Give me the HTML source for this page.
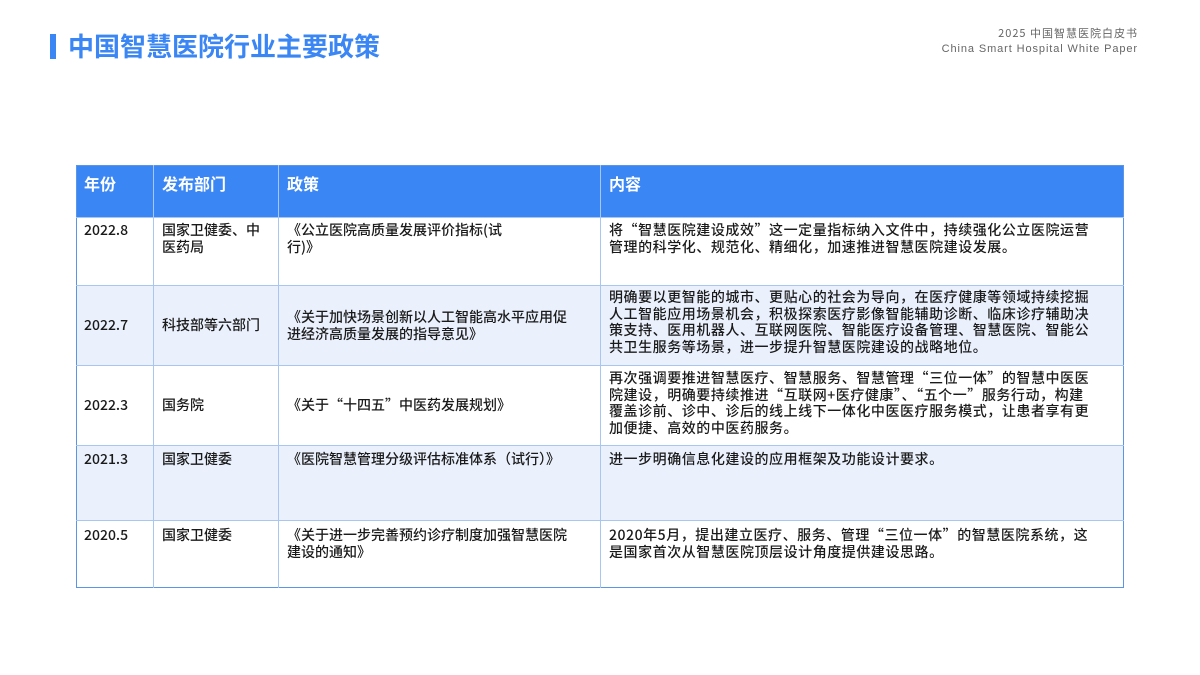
<!DOCTYPE html>
<html><head><meta charset="utf-8"><style>
body{margin:0;width:1200px;height:675px;background:#fff;position:relative;overflow:hidden;font-family:"Noto Sans CJK SC","Liberation Sans",sans-serif;color:#222}
.a{position:absolute}
.t{font-size:14px;line-height:16.5px;color:#1a1a1a;white-space:nowrap;font-weight:500}
.c{letter-spacing:0.55px}
.h{font-size:16px;font-weight:bold;color:#fff}
.vl{position:absolute;top:165px;height:423px;width:1px;background:#a9c6f0}
.hl{position:absolute;left:76px;width:1048px;height:1px;background:#a9c6f0}
</style></head><body>
<div class="a" style="left:50px;top:34px;width:6px;height:25px;background:#3a86f5"></div>
<div class="a" style="left:68px;top:28px;font-size:26px;line-height:36px;font-weight:bold;color:#3a86f5">中国智慧医院行业主要政策</div>
<div class="a" style="right:62px;top:26px;font-size:11px;color:#666;text-align:right;line-height:15px;letter-spacing:1px">2025 中国智慧医院白皮书<br><span style="font-family:'Liberation Sans',sans-serif;letter-spacing:0.9px">China Smart Hospital White Paper</span></div>

<div class="a" style="left:76px;top:165px;width:1048px;height:52px;background:#3a86f5"></div>
<div class="a" style="left:76px;top:285px;width:1048px;height:80px;background:#eaf1fd"></div>
<div class="a" style="left:76px;top:445px;width:1048px;height:75px;background:#eaf1fd"></div>
<div class="a" style="left:76px;top:165px;width:1046px;height:421px;border:1px solid #5b95e6"></div>
<div class="vl" style="left:153px"></div><div class="vl" style="left:278px"></div><div class="vl" style="left:600px"></div>
<div class="hl" style="top:217px"></div><div class="hl" style="top:285px"></div><div class="hl" style="top:365px"></div><div class="hl" style="top:445px"></div><div class="hl" style="top:520px"></div>

<div class="a h" style="left:84px;top:171px">年份</div>
<div class="a h" style="left:162px;top:171px">发布部门</div>
<div class="a h" style="left:287px;top:171px">政策</div>
<div class="a h" style="left:609px;top:171px">内容</div>

<div class="a t" style="left:84px;top:222px">2022.8</div>
<div class="a t" style="left:162px;top:222px">国家卫健委、中<br>医药局</div>
<div class="a t" style="left:287px;top:222px">《公立医院高质量发展评价指标(试<br>行)》</div>
<div class="a t c" style="left:609px;top:222px">将“智慧医院建设成效”这一定量指标纳入文件中，持续强化公立医院运营<br>管理的科学化、规范化、精细化，加速推进智慧医院建设发展。</div>

<div class="a t" style="left:84px;top:317px">2022.7</div>
<div class="a t" style="left:162px;top:317px">科技部等六部门</div>
<div class="a t" style="left:287px;top:309px">《关于加快场景创新以人工智能高水平应用促<br>进经济高质量发展的指导意见》</div>
<div class="a t c" style="left:609px;top:289px">明确要以更智能的城市、更贴心的社会为导向，在医疗健康等领域持续挖掘<br>人工智能应用场景机会，积极探索医疗影像智能辅助诊断、临床诊疗辅助决<br>策支持、医用机器人、互联网医院、智能医疗设备管理、智慧医院、智能公<br>共卫生服务等场景，进一步提升智慧医院建设的战略地位。</div>

<div class="a t" style="left:84px;top:397px">2022.3</div>
<div class="a t" style="left:162px;top:397px">国务院</div>
<div class="a t" style="left:287px;top:397px">《关于“十四五”中医药发展规划》</div>
<div class="a t c" style="left:609px;top:370px">再次强调要推进智慧医疗、智慧服务、智慧管理“三位一体”的智慧中医医<br>院建设，明确要持续推进“互联网+医疗健康”、“五个一”服务行动，构建<br>覆盖诊前、诊中、诊后的线上线下一体化中医医疗服务模式，让患者享有更<br>加便捷、高效的中医药服务。</div>

<div class="a t" style="left:84px;top:451px">2021.3</div>
<div class="a t" style="left:162px;top:451px">国家卫健委</div>
<div class="a t" style="left:287px;top:451px">《医院智慧管理分级评估标准体系（试行）》</div>
<div class="a t c" style="left:609px;top:451px">进一步明确信息化建设的应用框架及功能设计要求。</div>

<div class="a t" style="left:84px;top:527px">2020.5</div>
<div class="a t" style="left:162px;top:527px">国家卫健委</div>
<div class="a t" style="left:287px;top:527px">《关于进一步完善预约诊疗制度加强智慧医院<br>建设的通知》</div>
<div class="a t c" style="left:609px;top:527px">2020年5月，提出建立医疗、服务、管理“三位一体”的智慧医院系统，这<br>是国家首次从智慧医院顶层设计角度提供建设思路。</div>
</body></html>
